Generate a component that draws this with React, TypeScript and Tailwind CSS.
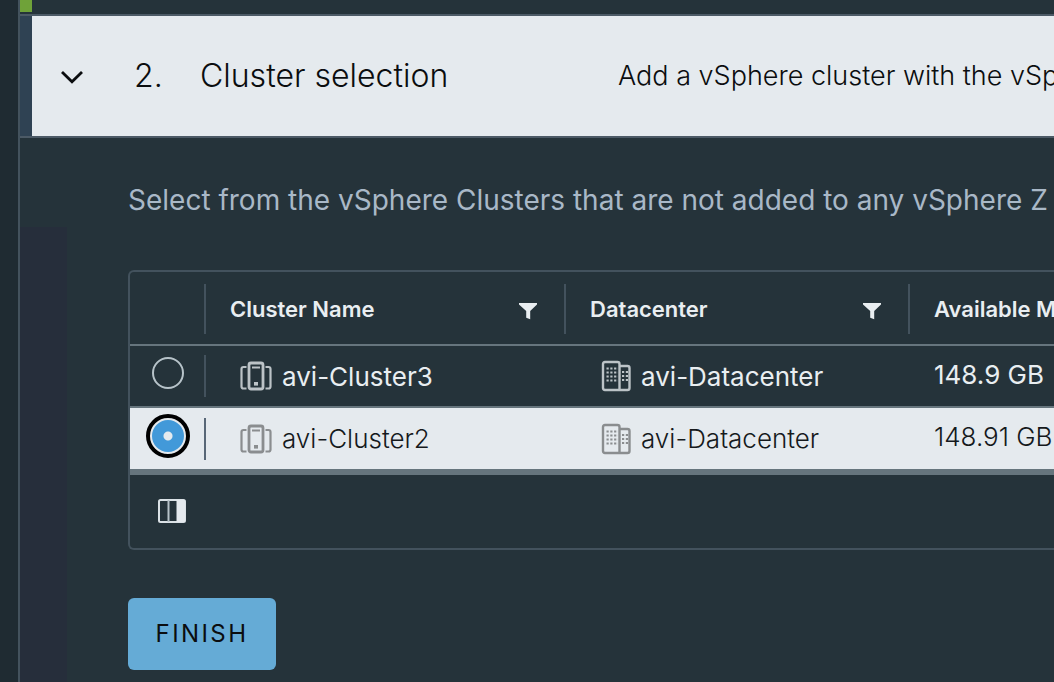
import { useState } from "react";

type Cluster = { name: string; datacenter: string; memory: string };

const clusters: Cluster[] = [
  { name: "avi-Cluster3", datacenter: "avi-Datacenter", memory: "148.9 GB" },
  { name: "avi-Cluster2", datacenter: "avi-Datacenter", memory: "148.91 GB" },
];

function ChevronIcon() {
  return (
    <svg viewBox="0 0 24 18" className="h-[18px] w-6 shrink-0" fill="none" stroke="#0b0d0f" strokeWidth="2.8" aria-hidden="true">
      <path d="M2 5 12 14.800 22 5" />
    </svg>
  );
}

function FilterIcon() {
  return (
    <svg viewBox="0 0 20 18" className="h-[18px] w-5" fill="#e9eef1" aria-hidden="true">
      <path d="M1 1h18v1.600L12.200 9V17.200L8.200 15.800V9L1 2.600z" />
    </svg>
  );
}

function ClusterIcon() {
  return (
    <svg viewBox="0 0 32 30" className="h-[30px] w-8 shrink-0" fill="none" stroke="currentColor" strokeWidth="2.2" aria-hidden="true">
      <rect x="9" y="2" width="14" height="26" rx="2" strokeWidth="2.8" />
      <path d="M12 6.5h8" strokeWidth="2" />
      <rect x="14" y="21" width="4" height="3.6" fill="currentColor" stroke="none" />
      <path d="M6.5 6H3.5Q1.500 6 1.500 8V25.500Q1.500 27.500 3.500 27.500H6.500M25.500 6H28.500Q30.500 6 30.500 8V25.500Q30.500 27.500 28.500 27.500H25.500" />
    </svg>
  );
}

function DatacenterIcon() {
  return (
    <svg viewBox="0 0 30 32" className="h-8 w-[30px] shrink-0" fill="none" stroke="currentColor" strokeWidth="2.4" aria-hidden="true">
      <path d="M18.500 30H4Q2 30 2 28V4Q2 2 4 2H16.500Q18.500 2 18.500 4V30ZM18.500 6H26.500Q28.500 6 28.500 8V28Q28.500 30 26.500 30H18.500" />
      <path
        d="M5.500 8.500H17M5.500 12.500H17M5.500 16.500H17M5.500 20.500H17M21 12H27M21 16H27M21 20H27"
        strokeWidth="2"
        strokeDasharray="2.200 1.600"
      />
    </svg>
  );
}

function ColumnsIcon() {
  return (
    <svg viewBox="0 0 28 24" className="h-6 w-7" aria-hidden="true">
      <rect x="1" y="1" width="26" height="22" rx="1.500" fill="none" stroke="#dbe2e6" strokeWidth="2" />
      <path d="M10.500 1V23" stroke="#b7c3c9" strokeWidth="2" />
      <path d="M18.500 1H27V23H18.500Z" fill="#e5eaee" />
    </svg>
  );
}

function ColumnHeader({ title, filter = false }: { title: string; filter?: boolean }) {
  return (
    <th scope="col" className="p-0 pt-3 pb-[10px] text-left font-semibold">
      <div className="flex h-[50px] items-center justify-between border-l-2 border-[#43525d] pr-[26px] pl-6">
        <span>{title}</span>
        {filter && (
          <button type="button" aria-label={`Filter ${title}`} className="pt-1">
            <FilterIcon />
          </button>
        )}
      </div>
    </th>
  );
}

export default function App() {
  const [selected, setSelected] = useState("avi-Cluster2");
  const [open, setOpen] = useState(true);

  return (
    <div className="flex min-h-screen overflow-hidden bg-[#25333a] font-['Inter','Liberation_Sans',sans-serif] whitespace-nowrap text-[#e9eef1]">
      <div className="w-[18px] shrink-0 bg-[#1f2b32]" />
      <main className="flex min-w-0 flex-1 flex-col border-l-2 border-[#43525d]">
        <div className="h-[14px]">
          <div className="h-3 w-3 bg-[#6fa239]" />
        </div>
        <h2 className="border-y-2 border-[#4c5a66] bg-[#2f4253] pl-3">
          <button
            type="button"
            aria-expanded={open}
            onClick={() => setOpen(!open)}
            className="flex h-[120px] w-full items-center bg-[#e5eaee] pl-7 text-left font-light text-[#0b0d0f]"
          >
            <ChevronIcon />
            <span className="ml-[50px] w-[66px] shrink-0 text-[32px]">2.</span>
            <span className="w-[418px] shrink-0 text-[32px]">Cluster selection</span>
            <span className="text-[27px]">Add a vSphere cluster with the vSp</span>
          </button>
        </h2>
        {open && (
          <div className="flex flex-1">
            <div className="mt-[89px] w-[47px] shrink-0 bg-[#262e3b]" />
            <section className="min-w-0 flex-1 pt-11 pb-3 pl-[61px]">
              <p className="text-[28px] leading-9 text-[#a9b8c7]">
                Select from the vSphere Clusters that are not added to any vSphere Z
              </p>
              <div className="mt-[52px] rounded-l-md border-2 border-r-0 border-[#43525d]">
                <table className="w-full table-fixed border-collapse">
                  <colgroup>
                    <col className="w-[74px]" />
                    <col className="w-[360px]" />
                    <col className="w-[344px]" />
                    <col />
                  </colgroup>
                  <thead className="text-[22px]">
                    <tr className="border-b-2 border-[#66757d]">
                      <td />
                      <ColumnHeader title="Cluster Name" filter />
                      <ColumnHeader title="Datacenter" filter />
                      <ColumnHeader title="Available M" />
                    </tr>
                  </thead>
                  <tbody className="text-[26px]">
                    {clusters.map((c) => {
                      const active = c.name === selected;
                      return (
                        <tr
                          key={c.name}
                          className={
                            active
                              ? "h-[62px] border-b-2 border-[#66757d] bg-[#e5eaee] font-light text-[#15191c] last:border-b-0"
                              : "h-[62px] border-b-2 border-[#66757d] last:border-b-0"
                          }
                        >
                          <td className="p-0 pb-[6px]">
                            <div className="flex h-11 items-center justify-center pl-[2px]">
                              <input
                                type="radio"
                                name="cluster"
                                aria-label={c.name}
                                checked={active}
                                onChange={() => setSelected(c.name)}
                                className="h-8 w-8 appearance-none rounded-full border-2 border-[#b7c3c9] checked:border-[#4299d9] checked:bg-[radial-gradient(circle,#e5eaee_0_4px,#4299d9_5px)] checked:outline-4 checked:outline-offset-2 checked:outline-black"
                              />
                            </div>
                          </td>
                          <td className="p-0">
                            <div
                              className={
                                active
                                  ? "flex h-[42px] items-center gap-[10px] border-l-2 border-[#586777] pl-[34px]"
                                  : "flex h-[42px] items-center gap-[10px] border-l-2 border-[#43525d] pl-[34px]"
                              }
                            >
                              <span className={active ? "text-[#8a8d8f]" : "text-[#bcc3c7]"}>
                                <ClusterIcon />
                              </span>
                              {c.name}
                            </div>
                          </td>
                          <td className="p-0">
                            <div className="flex items-center gap-[10px] pl-[37px]">
                              <span className={active ? "text-[#8a8d8f]" : "text-[#bcc3c7]"}>
                                <DatacenterIcon />
                              </span>
                              {c.datacenter}
                            </div>
                          </td>
                          <td className="p-0 pb-1 pl-[26px]">{c.memory}</td>
                        </tr>
                      );
                    })}
                  </tbody>
                </table>
                <div className="flex h-[79px] items-center border-t-6 border-[#66757d] pb-[2px] pl-7">
                  <button type="button" aria-label="Manage columns">
                    <ColumnsIcon />
                  </button>
                </div>
              </div>
              <button
                type="button"
                className="mt-12 h-[72px] w-[148px] rounded-md bg-[#65abd6] text-2xl tracking-widest text-[#0b0d0f]"
              >
                FINISH
              </button>
            </section>
          </div>
        )}
      </main>
    </div>
  );
}
